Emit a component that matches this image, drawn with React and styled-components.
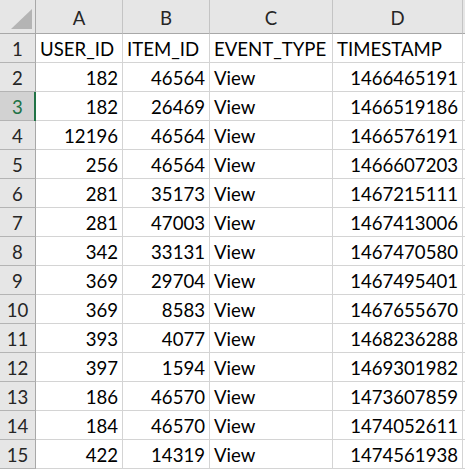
import styled, { createGlobalStyle } from 'styled-components';

const GlobalStyle = createGlobalStyle`
  html, body {
    margin: 0;
    padding: 0;
    background: #ffffff;
  }
  body {
    font-family: Lato, "Open Sans", sans-serif;
  }
`;

const columns = ['A', 'B', 'C', 'D'];

const rows = [
  ['USER_ID', 'ITEM_ID', 'EVENT_TYPE', 'TIMESTAMP'],
  [182, 46564, 'View', 1466465191],
  [182, 26469, 'View', 1466519186],
  [12196, 46564, 'View', 1466576191],
  [256, 46564, 'View', 1466607203],
  [281, 35173, 'View', 1467215111],
  [281, 47003, 'View', 1467413006],
  [342, 33131, 'View', 1467470580],
  [369, 29704, 'View', 1467495401],
  [369, 8583, 'View', 1467655670],
  [393, 4077, 'View', 1468236288],
  [397, 1594, 'View', 1469301982],
  [186, 46570, 'View', 1473607859],
  [184, 46570, 'View', 1474052611],
  [422, 14319, 'View', 1474561938],
];

const ACTIVE_ROW = 3;

const Sheet = styled.div`
  display: grid;
  grid-template-columns: 36px 87px 87px 123px 130px 1fr;
  grid-auto-rows: 29px;
  grid-template-rows: 34px;
  width: 465px;
  height: 470px;
  overflow: hidden;
  font-size: 18.6px;
  color: #000;
`;

const Corner = styled.div`
  box-sizing: border-box;
  background: #e6e6e6;
  border-right: 1px solid #a8a8a8;
  border-bottom: 1px solid #a8a8a8;
  display: flex;
  align-items: flex-end;
  justify-content: flex-end;
  padding: 0 3px 4px 0;
`;

const ColHeader = styled.div`
  box-sizing: border-box;
  background: #e6e6e6;
  border-right: 1px solid #c4c4c4;
  border-bottom: 1px solid #a8a8a8;
  display: flex;
  align-items: center;
  justify-content: center;
  color: #262626;
  padding-top: 2px;
`;

const RowHeader = styled.div`
  box-sizing: border-box;
  position: relative;
  background: ${({ $active }) => ($active ? '#d2d2d2' : '#e6e6e6')};
  color: ${({ $active }) => ($active ? '#217346' : '#262626')};
  border-right: 1px solid #a8a8a8;
  border-bottom: 1px solid #b4b4b4;
  display: flex;
  align-items: center;
  justify-content: center;
  padding-top: 2px;

  &::after {
    content: '';
    display: ${({ $active }) => ($active ? 'block' : 'none')};
    position: absolute;
    right: -1px;
    top: 0;
    bottom: -1px;
    width: 2px;
    background: #217346;
  }
`;

const Cell = styled.div`
  box-sizing: border-box;
  border-right: 1px solid #d4d4d4;
  border-bottom: 1px solid #d4d4d4;
  display: flex;
  align-items: center;
  justify-content: ${({ $align }) => ($align === 'right' ? 'flex-end' : 'flex-start')};
  padding: 2px 4px 0 4px;
  white-space: nowrap;
  overflow: hidden;
`;

const Filler = styled(Cell)`
  border-right: none;
`;

const HeaderFiller = styled(ColHeader)`
  border-right: none;
`;

const CornerMark = () => (
  <svg width="21" height="20" viewBox="0 0 21 20">
    <polygon points="21,0 21,20 0,20" fill="#b4b4b4" />
  </svg>
);

export default function App() {
  return (
    <>
      <GlobalStyle />
      <Sheet>
        <Corner>
          <CornerMark />
        </Corner>
        {columns.map((c) => (
          <ColHeader key={c}>{c}</ColHeader>
        ))}
        <HeaderFiller />
        {rows.map((row, i) => {
          const n = i + 1;
          return [
            <RowHeader key={`h${n}`} $active={n === ACTIVE_ROW}>
              {n}
            </RowHeader>,
            ...row.map((v, j) => (
              <Cell key={`${n}-${j}`} $align={typeof v === 'number' ? 'right' : 'left'}>
                {v}
              </Cell>
            )),
            <Filler key={`f${n}`} />,
          ];
        })}
      </Sheet>
    </>
  );
}
